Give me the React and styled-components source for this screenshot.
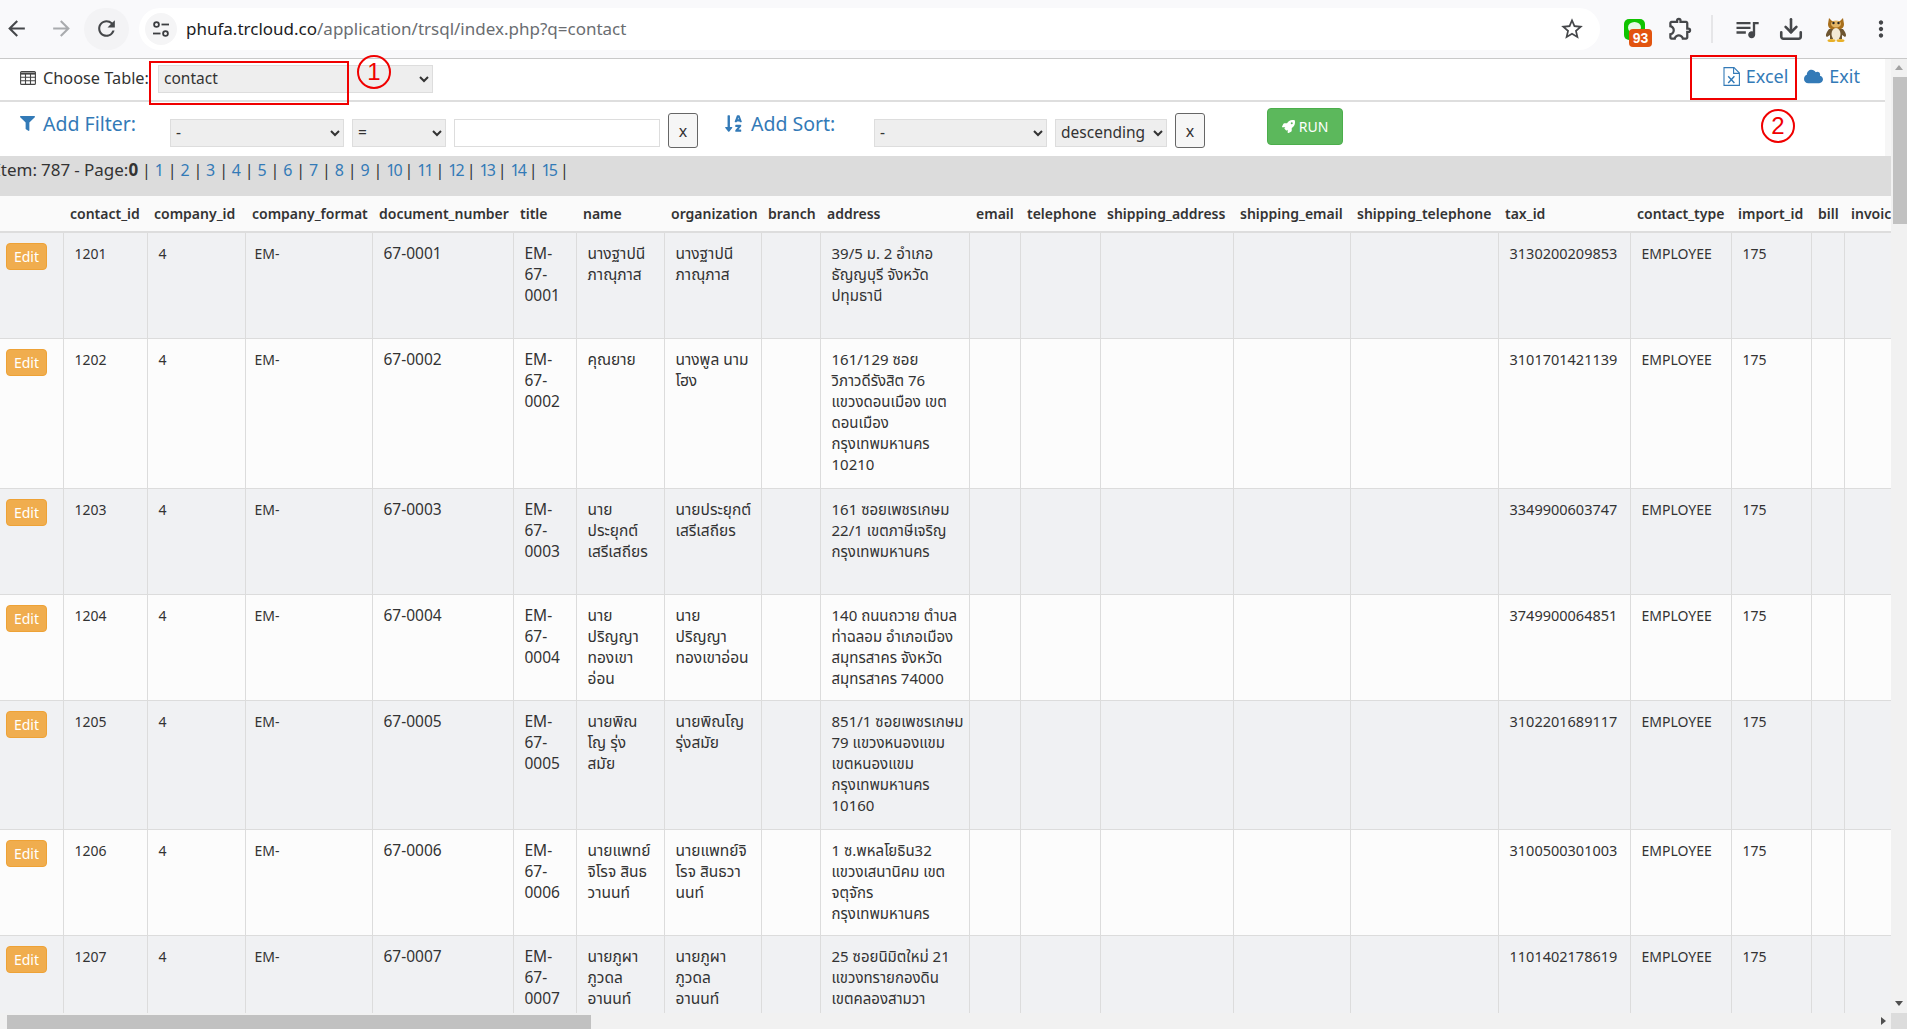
import React from "react";
import styled, { createGlobalStyle } from "styled-components";
import {
  MdArrowBack,
  MdArrowForward,
  MdRefresh,
  MdStarBorder,
  MdOutlineExtension,
  MdOutlineQueueMusic,
  MdMoreVert,
} from "react-icons/md";
import { LuDownload } from "react-icons/lu";
import { FaFilter, FaSortAlphaDown, FaRocket, FaCloud } from "react-icons/fa";

const FONT = `"Noto Sans", "Noto Sans Thai", "Open Sans", sans-serif`;

const GlobalStyle = createGlobalStyle`
  html, body {
    margin: 0;
    padding: 0;
    overflow: hidden;
    font-family: ${FONT};
    font-size: 14px;
    color: #333;
  }
  * { box-sizing: border-box; }
`;

const Page = styled.div`
  position: relative;
  width: 1907px;
  height: 1029px;
  display: flex;
  flex-direction: column;
  overflow: hidden;
  background: #fff;
`;

/* browser toolbar */
const ChromeBar = styled.header`
  flex: 0 0 59px;
  display: flex;
  align-items: center;
  padding-bottom: 1px;
  background: #f9f9fb;
  border-bottom: 1px solid #c9c9c9;
`;

const NavButtons = styled.div`
  display: flex;
  margin-left: -6px;
`;

const NavButton = styled.div`
  width: 45px;
  height: 42px;
  display: flex;
  align-items: center;
  justify-content: center;
  font-size: 25px;
  color: ${(p) => (p.$off ? "#a9abae" : "#45474a")};
  border-radius: 21px;
  background: ${(p) => (p.$hover ? "#f3f3f5" : "transparent")};
`;

const UrlPill = styled.div`
  flex: 0 0 1461px;
  height: 42px;
  margin-left: 10px;
  display: flex;
  align-items: center;
  padding: 0 15px 0 6px;
  background: #fff;
  border-radius: 21px;
`;

const SiteIcon = styled.div`
  width: 32px;
  height: 32px;
  display: flex;
  align-items: center;
  justify-content: center;
  border-radius: 50%;
  background: #f5f5f6;
`;

const UrlText = styled.div`
  margin-left: 9px;
  flex: 1;
  font-size: 17px;
  color: #6a6d71;
  white-space: nowrap;
  b {
    font-weight: 400;
    color: #1c1c1e;
  }
`;

const StarSlot = styled.div`
  font-size: 26px;
  color: #45474a;
  display: flex;
`;

const Tools = styled.div`
  margin-left: 12px;
  display: grid;
  grid-template-columns: 44px 48px 16px 54px 34px 56px 34px;
  align-items: center;
`;

const ToolSlot = styled.div`
  position: relative;
  height: 42px;
  display: flex;
  align-items: center;
  justify-content: center;
  font-size: ${(p) => p.$size || 26}px;
  color: #45474a;
`;

const Divider = styled.div`
  width: 2px;
  height: 28px;
  margin: 0 auto;
  background: #e6e6e8;
`;

const LineIcon = styled.div`
  position: absolute;
  left: 12px;
  top: 11px;
  width: 21px;
  height: 21px;
  border-radius: 5px;
  background: #10c300;
  display: flex;
  align-items: center;
  justify-content: center;
`;

const LineBubble = styled.div`
  width: 13px;
  height: 11px;
  margin-bottom: 4px;
  border-radius: 50%;
  background: #fff;
  opacity: 0.9;
`;

const CountBadge = styled.div`
  position: absolute;
  left: 17px;
  top: 21px;
  width: 23px;
  height: 18px;
  border-radius: 4px;
  background: #e2540f;
  color: #fff;
  font-family: "Liberation Sans", sans-serif;
  font-size: 14px;
  font-weight: 700;
  line-height: 18px;
  text-align: center;
`;

/* page area with its scrollbars */
const Workspace = styled.div`
  flex: 1;
  min-height: 0;
  display: grid;
  grid-template-columns: 1fr 16px;
  grid-template-rows: 1fr 16px;
`;

const Content = styled.main`
  min-width: 0;
  overflow: hidden;
  background: #f6f6f6;
`;

const TopPanel = styled.div`
  margin-right: 6px;
  background: #fff;
`;

const NavRow = styled.div`
  height: 43px;
  display: flex;
  padding: 6px 0 0 20px;
  border-bottom: 2px solid #dedede;
`;

const TableLabel = styled.div`
  width: 138px;
  height: 28px;
  margin-top: -1px;
  display: flex;
  align-items: center;
  gap: 7px;
  font-size: 16.3px;
  color: #333;
  white-space: nowrap;
`;

const NativeSelect = styled.select`
  flex: none;
  width: ${(p) => p.$w}px;
  height: 28px;
  margin-top: ${(p) => p.$top || 0}px;
  padding: 0 0 2px 1px;
  background-color: #eee;
  border: 1px solid #ddd;
  border-radius: 0;
  font-family: ${FONT};
  font-size: 15.5px;
  color: #333;
`;

const RightLinks = styled.div`
  margin-left: auto;
  padding-right: 25px;
  margin-top: -3px;
  height: 28px;
  display: flex;
  align-items: center;
  color: #337ab7;
  font-size: 18px;
`;

const TopLink = styled.a`
  display: flex;
  align-items: center;
  gap: 6px;
  color: #337ab7;
  text-decoration: none;
`;

const LinkBar = styled.span`
  width: 1px;
  height: 18px;
  margin: 0 8px 0 7px;
  background: #777;
`;

const FilterRow = styled.div`
  height: 54px;
  display: flex;
  align-items: flex-start;
  padding: 11px 0 0 20px;
  gap: 8px;
`;

const FilterLabel = styled.div`
  flex: none;
  width: 150px;
  margin: -1px -8px 0 ${(p) => p.$ml || 0}px;
  display: flex;
  align-items: center;
  gap: 8px;
  height: 22px;
  color: #337ab7;
  font-size: 19.5px;
  white-space: nowrap;
  svg {
    flex: none;
  }
`;

const TextInput = styled.input`
  flex: none;
  width: 206px;
  height: 28px;
  margin-top: 6px;
  background: #fff;
  border: 1px solid #ddd;
`;

const ClearButton = styled.button`
  flex: none;
  width: 30px;
  height: 35px;
  padding: 0;
  background: #f6f6f6;
  border: 1px solid #666;
  border-radius: 3px;
  font-family: ${FONT};
  font-size: 16px;
  color: #333;
`;

const RunButton = styled.button`
  flex: none;
  width: 76px;
  height: 37px;
  margin: -5px 0 0 54px;
  display: flex;
  align-items: center;
  justify-content: center;
  gap: 4px;
  background: #5cb85c;
  border: 1px solid #4cae4c;
  border-radius: 4px;
  font-family: ${FONT};
  font-size: 14px;
  color: #fff;
`;

const PagerBand = styled.div`
  height: 40px;
  background: #dcdcdc;
  font-size: 16px;
  line-height: 28px;
  white-space: nowrap;
  overflow: hidden;
`;

const PagerText = styled.div`
  margin-left: -5px;
  word-spacing: -0.3px;
`;

const PagerLead = styled.span`
  font-size: 17px;
`;

const PageLink = styled.a`
  color: #337ab7;
  text-decoration: none;
  letter-spacing: ${(p) => (p.$double ? "-1.9px" : "0")};
`;

/* data table */
const DataTable = styled.table`
  table-layout: fixed;
  width: 1944px;
  border-collapse: collapse;
`;

const ColWidth = styled.col`
  width: ${(p) => p.$w}px;
`;

const HeadCell = styled.th`
  height: 36px;
  padding: 0 0 0 7px;
  background: #fafafa;
  border-bottom: 2px solid #ddd;
  font-size: 14px;
  font-weight: 600;
  color: #333;
  text-align: left;
  white-space: nowrap;
  overflow: hidden;
`;

const Row = styled.tr`
  background: ${(p) => (p.$odd ? "#f0f1f3" : "#fcfcfc")};
`;

const Cell = styled.td`
  height: ${(p) => p.$h}px;
  padding: 10px 0 0 ${(p) => p.$pad || 11}px;
  vertical-align: top;
  border: 1px solid #dcdcdc;
  font-size: ${(p) => p.$size || 14}px;
  line-height: 21px;
  color: #333;
  white-space: pre;
  overflow: hidden;
  &:first-child {
    padding: 10px 0 0 6px;
    border-left: 0;
  }
`;

const EditButton = styled.button`
  display: block;
  width: 41px;
  height: 27px;
  padding: 0;
  background: #f0ad4e;
  border: 1px solid #eea236;
  border-radius: 4px;
  font-family: ${FONT};
  font-size: 14px;
  color: #fff;
`;

/* fake page scrollbars */
const VTrack = styled.div`
  display: flex;
  flex-direction: column;
  align-items: center;
  background: #f1f1f1;
`;

const ArrowUp = styled.div`
  flex: none;
  width: 0;
  height: 0;
  margin-top: 6px;
  border: 4px solid transparent;
  border-top: 0;
  border-bottom: 5px solid #a3a3a3;
`;

const VThumb = styled.div`
  flex: none;
  width: 14px;
  height: 147px;
  margin: 7px 0 0 2px;
  background: #c1c1c1;
`;

const ArrowDown = styled.div`
  width: 0;
  height: 0;
  margin-top: auto;
  margin-bottom: 7px;
  border: 4px solid transparent;
  border-bottom: 0;
  border-top: 5px solid #505050;
`;

const HTrack = styled.div`
  display: flex;
  align-items: flex-end;
  padding-left: 7px;
  background: #f1f1f1;
`;

const HThumb = styled.div`
  width: 584px;
  height: 14px;
  background: #c1c1c1;
`;

const ArrowRight = styled.div`
  align-self: center;
  margin-left: auto;
  margin-right: 5px;
  width: 0;
  height: 0;
  border: 4px solid transparent;
  border-right: 0;
  border-left: 5px solid #505050;
`;

const Corner = styled.div`
  background: #dcdcdc;
`;

/* red annotations laid over the screenshot */
const RedBox = styled.div`
  position: absolute;
  left: ${(p) => p.$x}px;
  top: ${(p) => p.$y}px;
  width: ${(p) => p.$w}px;
  height: ${(p) => p.$h}px;
  border: 2px solid #f00000;
  pointer-events: none;
`;

const RedCircle = styled.div`
  position: absolute;
  left: ${(p) => p.$x}px;
  top: ${(p) => p.$y}px;
  width: 34px;
  height: 34px;
  border: 2px solid #f00000;
  border-radius: 50%;
  display: flex;
  align-items: center;
  justify-content: center;
  font-family: "Liberation Sans", sans-serif;
  font-size: 24px;
  color: #f00000;
`;

const COLUMNS = [
  ["", 63],
  ["contact_id", 84],
  ["company_id", 98],
  ["company_format", 127],
  ["document_number", 141],
  ["title", 63],
  ["name", 88],
  ["organization", 97],
  ["branch", 59],
  ["address", 149],
  ["email", 51],
  ["telephone", 80],
  ["shipping_address", 133],
  ["shipping_email", 117],
  ["shipping_telephone", 148],
  ["tax_id", 132],
  ["contact_type", 101],
  ["import_id", 80],
  ["bill", 33],
  ["invoice", 100],
];

const ROWS = [
  {
    id: 1201,
    h: 106,
    name: "นางฐาปนี\nภาณุภาส",
    org: "นางฐาปนี\nภาณุภาส",
    address: "39/5 ม. 2 อำเภอ\nธัญญบุรี จังหวัด\nปทุมธานี",
    tax: "3130200209853",
  },
  {
    id: 1202,
    h: 150,
    name: "คุณยาย",
    org: "นางพูล นาม\nโฮง",
    address: "161/129 ซอย\nวิภาวดีรังสิต 76\nแขวงดอนเมือง เขต\nดอนเมือง\nกรุงเทพมหานคร\n10210",
    tax: "3101701421139",
  },
  {
    id: 1203,
    h: 106,
    name: "นาย\nประยุกต์\nเสรีเสถียร",
    org: "นายประยุกต์\nเสรีเสถียร",
    address: "161 ซอยเพชรเกษม\n22/1 เขตภาษีเจริญ\nกรุงเทพมหานคร",
    tax: "3349900603747",
  },
  {
    id: 1204,
    h: 106,
    name: "นาย\nปริญญา\nทองเขา\nอ่อน",
    org: "นาย\nปริญญา\nทองเขาอ่อน",
    address: "140 ถนนถวาย ตำบล\nท่าฉลอม อำเภอเมือง\nสมุทรสาคร จังหวัด\nสมุทรสาคร 74000",
    tax: "3749900064851",
  },
  {
    id: 1205,
    h: 129,
    name: "นายพิณ\nโญ รุ่ง\nสมัย",
    org: "นายพิณโญ\nรุ่งสมัย",
    address: "851/1 ซอยเพชรเกษม\n79 แขวงหนองแขม\nเขตหนองแขม\nกรุงเทพมหานคร\n10160",
    tax: "3102201689117",
  },
  {
    id: 1206,
    h: 106,
    name: "นายแพทย์\nจิโรจ สินธ\nวานนท์",
    org: "นายแพทย์จิ\nโรจ สินธวา\nนนท์",
    address: "1 ซ.พหลโยธิน32\nแขวงเสนานิคม เขต\nจตุจักร\nกรุงเทพมหานคร",
    tax: "3100500301003",
  },
  {
    id: 1207,
    h: 106,
    name: "นายภูผา\nภูวดล\nอานนท์",
    org: "นายภูผา\nภูวดล\nอานนท์",
    address: "25 ซอยนิมิตใหม่ 21\nแขวงทรายกองดิน\nเขตคลองสามวา",
    tax: "1101402178619",
  },
];

const SiteSettingsIcon = () => (
  <svg width="18" height="18" viewBox="0 0 18 18" fill="none" stroke="#3c3e41" strokeWidth="1.8">
    <circle cx="4.5" cy="4.5" r="2.4" />
    <path d="M9.5 4.5H17" />
    <path d="M1 13.5H8.5" />
    <circle cx="13.5" cy="13.5" r="2.4" />
  </svg>
);

const GridIcon = () => (
  <svg width="16" height="14" viewBox="0 0 16 14" fill="none" stroke="#444" strokeWidth="1.1">
    <rect x=".6" y=".6" width="14.8" height="12.8" rx="1" />
    <path d="M.6 2.6H15.4" strokeWidth="2" />
    <path d="M.6 6.2H15.4M.6 9.8H15.4M5.5 3V13.4M10.5 3V13.4" />
  </svg>
);

const ExcelIcon = () => (
  <svg width="17" height="19" viewBox="0 0 17 19" fill="none" stroke="#337ab7" strokeWidth="1.1">
    <path d="M1 .6H11L16.4 6V18.4H1Z" />
    <path d="M10.6 .8V6.4H16.2" />
    <path d="M5.2 9.2L11.4 16M11.4 9.2L5.2 16" strokeWidth="1.4" />
  </svg>
);

const AvatarIcon = () => (
  <svg width="24" height="28" viewBox="0 0 24 28">
    <path d="M5 3L8 6H16L19 3L20 9C20 13 17 15 12 15C7 15 4 13 4 9Z" fill="#a86f1c" />
    <ellipse cx="12" cy="9" rx="5" ry="3.4" fill="#e3b565" />
    <circle cx="9.5" cy="8" r="1.2" fill="#222" />
    <circle cx="14.5" cy="8" r="1.2" fill="#222" />
    <path d="M5 14C2 18 1 21 3 22L6 20V24H18V20L21 22C23 21 22 18 19 14Z" fill="#6e5632" />
    <ellipse cx="12" cy="19" rx="4.5" ry="6" fill="#f3ead5" />
    <ellipse cx="7.5" cy="25.5" rx="4" ry="1.6" fill="#e8b028" />
    <ellipse cx="16.5" cy="25.5" rx="4" ry="1.6" fill="#e8b028" />
  </svg>
);

const PAGES = [1, 2, 3, 4, 5, 6, 7, 8, 9, 10, 11, 12, 13, 14, 15];

const App = () => {
  return (
    <Page>
      <GlobalStyle />
      <ChromeBar>
        <NavButtons>
          <NavButton><MdArrowBack /></NavButton>
          <NavButton $off><MdArrowForward /></NavButton>
          <NavButton $hover><MdRefresh /></NavButton>
        </NavButtons>
        <UrlPill>
          <SiteIcon><SiteSettingsIcon /></SiteIcon>
          <UrlText>
            <b>phufa.trcloud.co</b>/application/trsql/index.php?q=contact
          </UrlText>
          <StarSlot><MdStarBorder /></StarSlot>
        </UrlPill>
        <Tools>
          <ToolSlot>
            <LineIcon><LineBubble /></LineIcon>
            <CountBadge>93</CountBadge>
          </ToolSlot>
          <ToolSlot $size={27}><MdOutlineExtension /></ToolSlot>
          <Divider />
          <ToolSlot $size={28}><MdOutlineQueueMusic /></ToolSlot>
          <ToolSlot $size={26}><LuDownload strokeWidth={2.4} /></ToolSlot>
          <ToolSlot><AvatarIcon /></ToolSlot>
          <ToolSlot $size={26}><MdMoreVert /></ToolSlot>
        </Tools>
      </ChromeBar>

      <Workspace>
        <Content>
          <TopPanel>
            <NavRow>
              <TableLabel><GridIcon /> Choose Table:</TableLabel>
              <NativeSelect $w={275} defaultValue="contact">
                <option>contact</option>
              </NativeSelect>
              <RightLinks>
                <TopLink href="#"><ExcelIcon /> Excel</TopLink>
                <LinkBar />
                <TopLink href="#"><FaCloud size={19} /> Exit</TopLink>
              </RightLinks>
            </NavRow>
            <FilterRow>
              <FilterLabel><FaFilter size={15} /> Add Filter:</FilterLabel>
              <NativeSelect $w={174} $top={6}><option>-</option></NativeSelect>
              <NativeSelect $w={94} $top={6}><option>=</option></NativeSelect>
              <TextInput />
              <ClearButton>x</ClearButton>
              <FilterLabel $ml={18}><FaSortAlphaDown size={19} /> Add Sort:</FilterLabel>
              <NativeSelect $w={173} $top={6}><option>-</option></NativeSelect>
              <NativeSelect $w={112} $top={6}><option>descending</option></NativeSelect>
              <ClearButton>x</ClearButton>
              <RunButton><FaRocket size={13} /> RUN</RunButton>
            </FilterRow>
          </TopPanel>
          <PagerBand>
            <PagerText>
              <PagerLead>Item: 787 - Page:<strong>0</strong></PagerLead> |{" "}
              {PAGES.map((n) => (
                <React.Fragment key={n}>
                  <PageLink href="#" $double={n > 9}>{n}</PageLink> |{" "}
                </React.Fragment>
              ))}
            </PagerText>
          </PagerBand>
          <DataTable>
            <colgroup>
              {COLUMNS.map(([name, w]) => (
                <ColWidth key={name} $w={w} />
              ))}
            </colgroup>
            <thead>
              <tr>
                {COLUMNS.map(([name]) => (
                  <HeadCell key={name}>{name}</HeadCell>
                ))}
              </tr>
            </thead>
            <tbody>
              {ROWS.map((r, i) => {
                const num = String(r.id - 1200).padStart(4, "0");
                return (
                  <Row key={r.id} $odd={i % 2 === 0}>
                    <Cell $h={r.h}><EditButton>Edit</EditButton></Cell>
                    <Cell>{r.id}</Cell>
                    <Cell>4</Cell>
                    <Cell $pad={9}>EM-</Cell>
                    <Cell $size={15.5}>67-{num}</Cell>
                    <Cell $size={15.5}>{`EM-\n67-\n${num}`}</Cell>
                    <Cell $size={15.5}>{r.name}</Cell>
                    <Cell $size={15.5}>{r.org}</Cell>
                    <Cell />
                    <Cell $size={15}>{r.address}</Cell>
                    <Cell />
                    <Cell />
                    <Cell />
                    <Cell />
                    <Cell />
                    <Cell $size={14.5}>{r.tax}</Cell>
                    <Cell>EMPLOYEE</Cell>
                    <Cell>175</Cell>
                    <Cell />
                    <Cell />
                  </Row>
                );
              })}
            </tbody>
          </DataTable>
        </Content>
        <VTrack>
          <ArrowUp />
          <VThumb />
          <ArrowDown />
        </VTrack>
        <HTrack>
          <HThumb />
          <ArrowRight />
        </HTrack>
        <Corner />
      </Workspace>

      <RedBox $x={149} $y={61} $w={200} $h={44} />
      <RedCircle $x={357} $y={55}>1</RedCircle>
      <RedBox $x={1690} $y={55} $w={107} $h={45} />
      <RedCircle $x={1761} $y={109}>2</RedCircle>
    </Page>
  );
};

export default App;
